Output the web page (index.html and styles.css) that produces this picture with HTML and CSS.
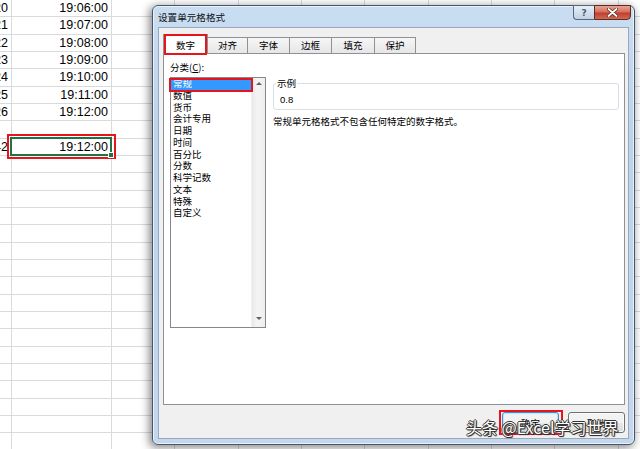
FILE: index.html
```html
<!DOCTYPE html>
<html lang="zh">
    <head>
        <title>设置单元格格式</title>
        <meta charset="utf-8">
        <link rel="stylesheet" href="styles.css">
    </head>
    <body>
        <div class="sheet">
            <div class="row"><div class="cell ca">20</div><div class="cell cb">19:06:00</div><div class="rest"></div></div>
            <div class="row"><div class="cell ca">21</div><div class="cell cb">19:07:00</div><div class="rest"></div></div>
            <div class="row"><div class="cell ca">22</div><div class="cell cb">19:08:00</div><div class="rest"></div></div>
            <div class="row"><div class="cell ca">23</div><div class="cell cb">19:09:00</div><div class="rest"></div></div>
            <div class="row"><div class="cell ca">24</div><div class="cell cb">19:10:00</div><div class="rest"></div></div>
            <div class="row"><div class="cell ca">25</div><div class="cell cb">19:11:00</div><div class="rest"></div></div>
            <div class="row"><div class="cell ca">26</div><div class="cell cb">19:12:00</div><div class="rest"></div></div>
            <div class="row"><div class="cell ca"></div><div class="cell cb"></div><div class="rest"></div></div>
            <div class="row"><div class="cell ca">42</div><div class="cell cb sel">19:12:00<span class="handle"></span></div><div class="rest"></div></div>
            <div class="row"><div class="cell ca"></div><div class="cell cb"></div><div class="rest"></div></div>
            <div class="row"><div class="cell ca"></div><div class="cell cb"></div><div class="rest"></div></div>
            <div class="row"><div class="cell ca"></div><div class="cell cb"></div><div class="rest"></div></div>
            <div class="row"><div class="cell ca"></div><div class="cell cb"></div><div class="rest"></div></div>
            <div class="row"><div class="cell ca"></div><div class="cell cb"></div><div class="rest"></div></div>
            <div class="row"><div class="cell ca"></div><div class="cell cb"></div><div class="rest"></div></div>
            <div class="row"><div class="cell ca"></div><div class="cell cb"></div><div class="rest"></div></div>
            <div class="row"><div class="cell ca"></div><div class="cell cb"></div><div class="rest"></div></div>
            <div class="row"><div class="cell ca"></div><div class="cell cb"></div><div class="rest"></div></div>
            <div class="row"><div class="cell ca"></div><div class="cell cb"></div><div class="rest"></div></div>
            <div class="row"><div class="cell ca"></div><div class="cell cb"></div><div class="rest"></div></div>
            <div class="row"><div class="cell ca"></div><div class="cell cb"></div><div class="rest"></div></div>
            <div class="row"><div class="cell ca"></div><div class="cell cb"></div><div class="rest"></div></div>
            <div class="row"><div class="cell ca"></div><div class="cell cb"></div><div class="rest"></div></div>
            <div class="row"><div class="cell ca"></div><div class="cell cb"></div><div class="rest"></div></div>
            <div class="row"><div class="cell ca"></div><div class="cell cb"></div><div class="rest"></div></div>
            <div class="row"><div class="cell ca"></div><div class="cell cb"></div><div class="rest"></div></div>
        </div>

        <div class="dialog">
            <div class="titlebar">
                <span class="title">设置单元格格式</span>
                <div class="caption-btns">
                    <div class="cap help">?</div>
                    <div class="cap close">
                        <svg width="11" height="9" viewBox="0 0 11 9">
                            <path d="M1.5 1 L9.5 8 M9.5 1 L1.5 8" stroke="#5b2119" stroke-width="3.2" stroke-linecap="round"/>
                            <path d="M1.5 1 L9.5 8 M9.5 1 L1.5 8" stroke="#fff" stroke-width="1.8" stroke-linecap="round"/>
                        </svg>
                    </div>
                </div>
            </div>
            <div class="client">
                <div class="tabs">
                    <div class="tab on">数字</div>
                    <div class="tab w41">对齐</div>
                    <div class="tab w43">字体</div>
                    <div class="tab w43">边框</div>
                    <div class="tab w44">填充</div>
                    <div class="tab w42">保护</div>
                </div>
                <div class="panel">
                    <div class="cat">
                        <div class="lbl">分类(<u>C</u>):</div>
                        <div class="list">
                            <div class="items">
                                <div class="item picked">常规</div>
                                <div class="item">数值</div>
                                <div class="item">货币</div>
                                <div class="item">会计专用</div>
                                <div class="item">日期</div>
                                <div class="item">时间</div>
                                <div class="item">百分比</div>
                                <div class="item">分数</div>
                                <div class="item">科学记数</div>
                                <div class="item">文本</div>
                                <div class="item">特殊</div>
                                <div class="item">自定义</div>
                            </div>
                            <div class="sb">
                                <span class="arr up"></span>
                                <span class="arr down"></span>
                            </div>
                        </div>
                    </div>
                    <div class="detail">
                        <fieldset class="sample">
                            <legend>示例</legend>
                            <div class="value">0.8</div>
                        </fieldset>
                        <div class="desc">常规单元格格式不包含任何特定的数字格式。</div>
                    </div>
                </div>
                <div class="foot">
                    <div class="btn def">确定</div>
                    <div class="btn">取消</div>
                </div>
            </div>
        </div>

        <div class="watermark">头条 @Excel学习世界</div>
    </body>
</html>
```

FILE: styles.css
```css
body {
  margin: 0;
  width: 640px;
  height: 449px;
  overflow: hidden;
  position: relative;
  background: #fff;
  color: #000;
  font-family: "Noto Sans CJK SC", "DejaVu Sans", sans-serif;
}

/* spreadsheet behind the dialog */
.sheet {
  font-family: "Liberation Sans", Arial, sans-serif;
  font-size: 12.5px;
}

.row {
  display: flex;
  height: 17.333px;
  box-sizing: border-box;
  border-bottom: 1px solid #dadada;
}

.cell {
  box-sizing: border-box;
  border-right: 1px solid #dadada;
  display: flex;
  justify-content: flex-end;
  align-items: center;
  padding-right: 3px;
  white-space: nowrap;
}

.ca {
  width: 12px;
  overflow: hidden;
}

.cb {
  width: 100px;
}

.rest {
  flex: 1;
  background-image: repeating-linear-gradient(to right, transparent 0 62.333px, #dadada 62.333px 63.333px);
}

.sel {
  position: relative;
}

.sel::before {
  content: "";
  position: absolute;
  left: -2px;
  right: -1px;
  top: -2px;
  bottom: -1px;
  border: 2px solid #217346;
}

.sel::after {
  content: "";
  position: absolute;
  left: -5px;
  right: -5px;
  top: -5px;
  bottom: -4px;
  border: 2px solid #e8141b;
}

.handle {
  position: absolute;
  right: -3px;
  bottom: -3px;
  width: 4px;
  height: 4px;
  background: #217346;
  border: 1px solid #fff;
  z-index: 1;
}

/* dialog window */
.dialog {
  position: absolute;
  left: 152px;
  top: 5px;
  width: 483px;
  height: 440px;
  box-sizing: border-box;
  border: 1px solid #44566c;
  border-radius: 6px;
  background: linear-gradient(to bottom, #c9ddf2, #bcd3ec 30%, #c3d8ee);
  box-shadow: inset 0 0 0 1px rgba(255, 255, 255, 0.65), -2px 2px 8px 1px rgba(0, 0, 0, 0.45);
  padding: 0 5px 5px 5px;
  display: flex;
  flex-direction: column;
  font-size: 9.5px;
}

.titlebar {
  height: 21px;
  display: flex;
  align-items: center;
}

.title {
  font-size: 9.6px;
  line-height: 12px;
  color: #111;
}

.caption-btns {
  margin-left: auto;
  margin-right: -2px;
  margin-top: -1px;
  align-self: flex-start;
  display: flex;
}

.cap {
  height: 15px;
  box-sizing: border-box;
  border: 1px solid #56677c;
  display: flex;
  align-items: center;
  justify-content: center;
}

.help {
  width: 21px;
  border-right: none;
  border-radius: 0 0 0 4px;
  background: linear-gradient(to bottom, #e6eef7, #d2dfed 50%, #c1d2e5);
  color: #4d5a6a;
  font-family: "DejaVu Sans", sans-serif;
  font-weight: bold;
  font-size: 9px;
  line-height: 10px;
}

.close {
  width: 37px;
  border-color: #5e2a22;
  border-radius: 0 0 4px 0;
  background: linear-gradient(to bottom, #e8a493, #d4705e 45%, #c0402f 55%, #cf6a52);
}

.client {
  flex: 1;
  box-sizing: border-box;
  border: 1px solid #98a9be;
  background: #f0f0f0;
  padding: 6px 3px 0 4px;
  display: flex;
  flex-direction: column;
}

.tabs {
  display: flex;
  align-items: flex-end;
  height: 19px;
}

.tab {
  height: 16px;
  box-sizing: border-box;
  border: 1px solid #8d9298;
  border-bottom: none;
  background: linear-gradient(to bottom, #f6f6f6, #e6e6e6);
  line-height: 14px;
  text-align: center;
  margin-left: -1px;
}

.tab.on {
  width: 45px;
  height: 20px;
  margin-left: 0;
  margin-bottom: -1px;
  padding-top: 3px;
  background: #fff;
  position: relative;
  z-index: 1;
}

.tab.on::after {
  content: "";
  position: absolute;
  left: 0;
  right: 0;
  top: -1px;
  bottom: -1px;
  border: 2px solid #e8141b;
}

.w41 { width: 41px; }
.w42 { width: 42px; }
.w43 { width: 43px; }
.w44 { width: 44px; }

.panel {
  height: 352px;
  box-sizing: border-box;
  border: 1px solid #8d9298;
  background: #fff;
  padding: 5px 5px 0 6px;
  display: flex;
  gap: 7px;
}

.cat {
  width: 96px;
  display: flex;
  flex-direction: column;
}

.lbl {
  line-height: 16px;
  margin-bottom: 2px;
}

.list {
  height: 251px;
  box-sizing: border-box;
  border: 1px solid #828790;
  display: flex;
}

.items {
  flex: 1;
  padding-top: 0;
}

.item {
  height: 11.75px;
  line-height: 11.75px;
  padding-left: 2px;
  white-space: nowrap;
}

.item.picked {
  background: #3399ff;
  color: #fff;
  position: relative;
}

.item.picked::after {
  content: "";
  position: absolute;
  left: -2px;
  right: -2px;
  top: 0;
  bottom: -2px;
  border: 2px solid #e8141b;
}

.sb {
  width: 14px;
  box-sizing: border-box;
  background: linear-gradient(to right, #e9e9e9, #f5f5f5 40%, #eeeeee);
  border-left: 1px solid #f0f0f0;
  display: flex;
  flex-direction: column;
  justify-content: space-between;
  align-items: center;
  padding: 4px 0 7px;
}

.arr {
  width: 0;
  height: 0;
  border-left: 3px solid transparent;
  border-right: 3px solid transparent;
}

.arr.up {
  border-bottom: 3px solid #606060;
}

.arr.down {
  border-top: 3px solid #606060;
}

.detail {
  flex: 1;
  padding-top: 18px;
}

.sample {
  margin: 0;
  border: 1px solid #d5dfe5;
  border-radius: 3px;
  padding: 5px 6px 3px;
}

.sample legend {
  margin-left: -4px;
  padding: 0 1px;
  line-height: 12px;
}

.value {
  font-family: "Liberation Sans", Arial, sans-serif;
  line-height: 12px;
}

.desc {
  margin-top: 5px;
  line-height: 12px;
}

.foot {
  flex: 1;
  display: flex;
  justify-content: flex-end;
  align-items: flex-start;
  padding-top: 7px;
  gap: 9px;
}

.btn {
  width: 57px;
  height: 21px;
  box-sizing: border-box;
  border: 1px solid #707070;
  border-radius: 3px;
  background: linear-gradient(to bottom, #f2f2f2 0 50%, #e8e8e8 50%, #dcdcdc);
  box-shadow: inset 0 0 0 1px #fbfbfb;
  display: flex;
  align-items: center;
  justify-content: center;
  line-height: 12px;
}

.btn.def {
  border-color: #3c8fd0;
  box-shadow: inset 0 0 0 1px #bfe6fb;
  position: relative;
}

.btn.def::after {
  content: "";
  position: absolute;
  left: -4px;
  right: -5px;
  top: -3px;
  bottom: -3px;
  border: 2px solid #e8141b;
}

.watermark {
  position: absolute;
  left: 466px;
  top: 418px;
  font-size: 16px;
  line-height: 18px;
  color: #fff;
  white-space: nowrap;
  text-shadow: 1px 0 0 #333, -1px 0 0 #333, 0 1px 0 #333, 0 -1px 0 #333, 1px 1px 1px #222;
}
```
